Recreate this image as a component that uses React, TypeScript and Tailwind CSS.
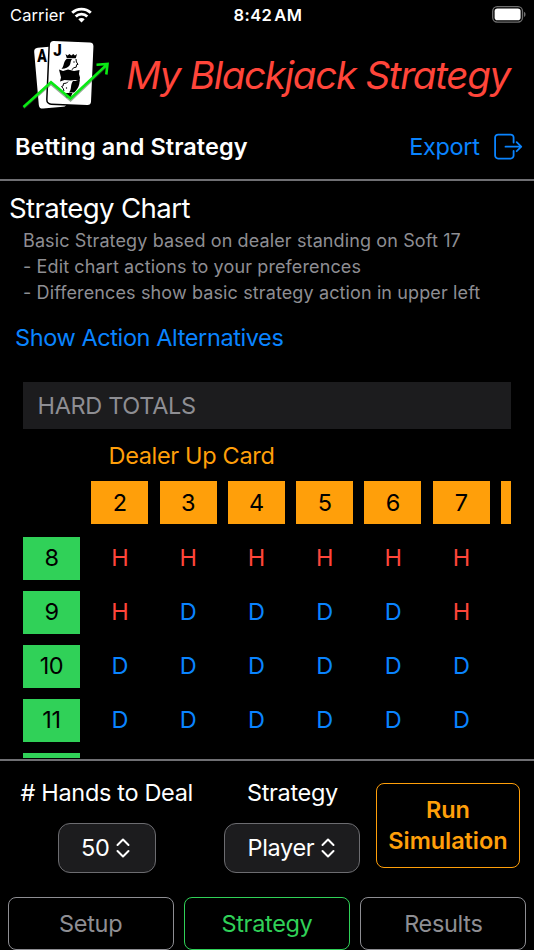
const upCards = ['2', '3', '4', '5', '6', '7', ''];

const hardTotals = [
  { total: '8', actions: ['H', 'H', 'H', 'H', 'H', 'H'] },
  { total: '9', actions: ['H', 'D', 'D', 'D', 'D', 'H'] },
  { total: '10', actions: ['D', 'D', 'D', 'D', 'D', 'D'] },
  { total: '11', actions: ['D', 'D', 'D', 'D', 'D', 'D'] },
  { total: '', actions: [] },
];

const tabs = ['Setup', 'Strategy', 'Results'];

const StatusBar = () => (
  <div className="grid h-[30px] shrink-0 grid-cols-3 items-center pr-2 pl-2.5 text-[16.5px]">
    <div className="flex items-center gap-1.5">
      <span className="tracking-[0.1px]">Carrier</span>
      <svg width="21" height="16" viewBox="0 0 21 16" fill="none" stroke="white" strokeWidth="2.8">
        <path d="M1.2 5.8a13.4 13.4 0 0 1 18.6 0" />
        <path d="M4.7 9.5a8.3 8.3 0 0 1 11.6 0" />
        <path d="M10.5 15.5l-3.2-3.3a4.6 4.6 0 0 1 6.4 0z" fill="white" stroke="none" />
      </svg>
    </div>
    <span className="text-center font-semibold tracking-[0.4px] [word-spacing:-2.5px]">8:42 AM</span>
    <svg className="mb-0.5 justify-self-end" width="34" height="17" viewBox="0 0 34 17">
      <rect x="0.7" y="0.7" width="29.8" height="15.4" rx="4.5" fill="none" stroke="#6f6f6f" strokeWidth="1.3" />
      <rect x="2.6" y="2.6" width="26" height="11.6" rx="2.8" fill="white" />
      <path d="M32 5.8c2 .8 2 4.4 0 5.2z" fill="#6f6f6f" />
    </svg>
  </div>
);

const Logo = () => (
  <svg width="100" height="80" viewBox="0 0 100 80">
    <g transform="rotate(-5 33 43)">
      <rect x="21.5" y="12" width="28" height="61" rx="4" fill="white" />
    </g>
    <rect x="33" y="6" width="45" height="64" rx="4.5" fill="white" stroke="black" strokeWidth="1.5" transform="rotate(2.5 55 38)" />
    <g fontFamily="Roboto, sans-serif" fontWeight="900" letterSpacing="0">
      <text x="22.3" y="26.7" fontSize="18" textLength="9.6" lengthAdjust="spacingAndGlyphs">A</text>
      <text x="38.3" y="21.3" fontSize="16" textLength="8.5" lengthAdjust="spacingAndGlyphs">J</text>
    </g>
    <g fill="black">
      <path d="M50.5 19l2 1.5 2-1.5 1.8 1.5 2-1.5 1.6 1.5L62 19l-1.2 4.2h-9z" />
      <path d="M51.5 24H57c-2 2.5-1 4.5-2.5 6.500-1.500 1.800-4 3.500-8 3.300 3-2.800 1.500-6.500 5-9.800z" />
      <path d="M61 24l.4 3 1.6 2.3-1.500.5-.3 2.400-2.700.6-1.500 2" fill="none" stroke="black" strokeWidth="1" />
      <circle cx="59" cy="27" r="0.7" />
      <path d="M44 34.500l4 1.500 5-1.500 6 1.500 5.500-1-.5 4 1 3.500-.5 4-4-1.500-5 .5-6-.5-4.500 1.500 1-4z" />
      <path d="M58 46c3 0 4.500-.3 6.500-1 .5 4-1.500 9.500-5.500 12.500H54c3-3 1-7.500 4-11.500z" />
      <path d="M49 56l-.8-2.500-1.600-2 1.500-.6.4-2.400 3-.4 1.500-1.500" fill="none" stroke="black" strokeWidth="1" />
      <circle cx="51.5" cy="53" r="0.7" />
      <path d="M48.5 58h9l-2 4.500h-4z" />
    </g>
    <path d="M8.5 73L36 48.500 55.500 65 91 31.500" fill="none" stroke="#2d5a2d" strokeWidth="3" opacity="0.5" />
    <path d="M8.5 72L36 47.200 55.500 63.500 92 29.500M81.500 29.800l11-.8-1.200 10.500" fill="none" stroke="#0aea14" strokeWidth="2.6" />
  </svg>
);

const ExportIcon = () => (
  <svg width="29" height="28" viewBox="0 0 29 28" fill="none" stroke="#0a84ff" strokeWidth="1.8" strokeLinecap="round" strokeLinejoin="round">
    <path d="M19.6 9.5V4.6a3 3 0 0 0-3-3H4.1a3 3 0 0 0-3 3v18a3 3 0 0 0 3 3h12.5a3 3 0 0 0 3-3V18" />
    <path d="M11.5 13.7h15.7M22.7 9.2l4.5 4.5-4.5 4.5" />
  </svg>
);

const UpDown = () => (
  <svg width="14" height="20" viewBox="0 0 14 20" fill="none" stroke="white" strokeWidth="2" strokeLinecap="round" strokeLinejoin="round">
    <path d="M1.5 7L7 1.5 12.5 7M1.5 13L7 18.5l5.5-5.5" />
  </svg>
);

const Picker = ({ label, value, className }: { label: string; value: string; className: string }) => (
  <div className="flex flex-col items-center">
    <span className="h-[30px] leading-[30px] whitespace-nowrap">{label}</span>
    <button className={`mt-[15px] flex h-[50px] items-center justify-center gap-[7px] rounded-xl border border-[#6c6c70] bg-[#1c1c1e] pr-0.5 ${className}`}>
      {value}
      <UpDown />
    </button>
  </div>
);

const App = () => (
  <div className="flex h-[950px] w-[534px] flex-col overflow-hidden bg-black font-['Inter',sans-serif] text-[23.5px] tracking-[-0.33px] text-white">
    <StatusBar />

    <header className="flex h-[90px] shrink-0 items-center pl-[15px]">
      <Logo />
      <h1 className="mt-[2px] ml-[11px] text-[38.6px] tracking-[-1.29px] whitespace-nowrap text-[#ff453a] italic">My Blackjack Strategy</h1>
    </header>

    <div className="flex h-[61px] shrink-0 items-center justify-between border-b-2 border-[#6f6f73] pr-[11.5px] pb-[5px] pl-[15px]">
      <h2 className="font-semibold tracking-[0.05px]">Betting and Strategy</h2>
      <button className="flex items-center gap-3.5 text-[#0a84ff]">
        Export
        <ExportIcon />
      </button>
    </div>

    <main className="h-[577px] shrink-0 overflow-hidden">
      <h3 className="mt-[9px] pl-[9px] text-[27.6px] leading-9 tracking-[-0.62px]">Strategy Chart</h3>
      <div className="mt-[2px] pl-[23px] text-[18px] leading-[26px] tracking-[0.12px] text-[#8e8e93]">
        <p>Basic Strategy based on dealer standing on Soft 17</p>
        <p>- Edit chart actions to your preferences</p>
        <p>- Differences show basic strategy action in upper left</p>
      </div>
      <button className="mt-[17px] ml-[15px] block h-[30px] leading-[30px] tracking-[-0.4px] text-[#0a84ff]">Show Action Alternatives</button>

      <section className="mt-[29px] ml-[23px] w-[488px] overflow-hidden">
        <h4 className="h-[47px] bg-[#1c1c1e] pl-[14.5px] leading-[47px] text-[#8e8e93]">HARD TOTALS</h4>
        <p className="mt-[11px] pl-[85.5px] leading-[31px] text-[#ff9f0a]">Dealer Up Card</p>
        <div className="mt-[10px] flex gap-[11.3px] pl-[68.3px]">
          {upCards.map((card) => (
            <div key={card} className="h-[43px] w-[57px] shrink-0 bg-[#ff9f0a] text-center leading-[43px] text-black">
              {card}
            </div>
          ))}
        </div>
        <div className="mt-[13px] flex flex-col gap-[11px]">
          {hardTotals.map((row) => (
            <div key={row.total} className="flex gap-[11.3px] text-center leading-[41px]">
              <div className="h-[43px] w-[57px] bg-[#30d158] text-black">{row.total}</div>
              {row.actions.map((action, i) => (
                <div key={i} className={action === 'H' ? 'w-[57px] text-[#ff453a]' : 'w-[57px] text-[#0a84ff]'}>
                  {action}
                </div>
              ))}
            </div>
          ))}
        </div>
      </section>
    </main>

    <footer className="mt-px flex grow flex-col border-t-2 border-[#6f6f73]">
      <div className="flex items-start pt-[17px] pl-[20.5px]">
        <Picker label="# Hands to Deal" value="50" className="w-[98px]" />
        <div className="ml-[31.5px]">
          <Picker label="Strategy" value="Player" className="w-[136px]" />
        </div>
        <button className="mt-[5px] ml-[15.5px] h-[85px] w-[144px] rounded-lg border-[1.5px] border-[#ff9f0a] pb-0.5 leading-[31px] font-semibold tracking-[-0.05px] text-[#ff9f0a]">
          Run Simulation
        </button>
      </div>
      <nav className="mt-auto flex gap-2.5 px-[7.5px]">
        {tabs.map((tab) => (
          <button
            key={tab}
            className={`h-[53px] flex-1 rounded-lg border-[1.5px] ${tab === 'Strategy' ? 'border-[#30d158] text-[#30d158]' : 'border-[#8e8e93] text-[#8e8e93]'}`}
          >
            {tab}
          </button>
        ))}
      </nav>
    </footer>
  </div>
);

export default App;
